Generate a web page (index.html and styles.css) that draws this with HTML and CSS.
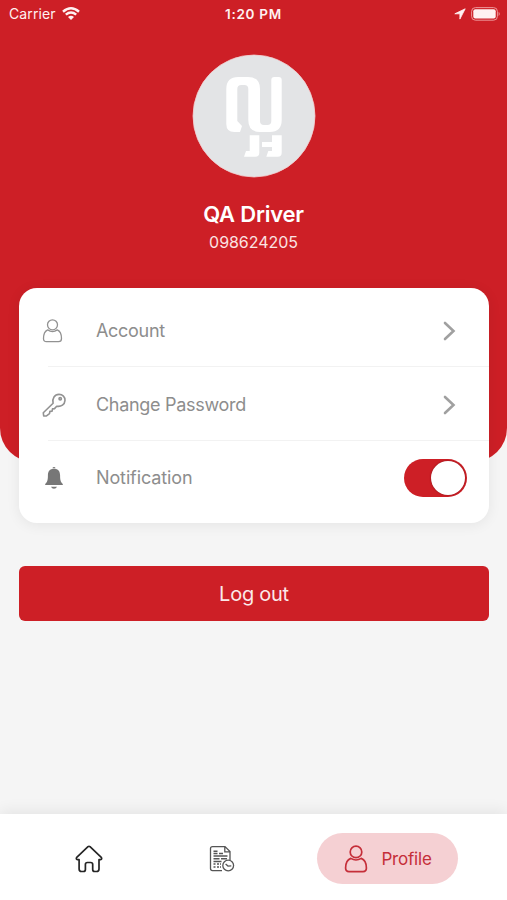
FILE: index.html
```html
<!DOCTYPE html>
<html lang="en">
<head>
<meta charset="utf-8">
<meta name="viewport" content="width=device-width, initial-scale=1">
<title>Profile</title>
<link rel="stylesheet" href="styles.css">
</head>
<body>
<div class="screen">
  <header class="hero">
    <div class="status">
      <div class="carrier"><span>Carrier</span>
        <svg width="18" height="14" viewBox="0 0 18 14" fill="none" stroke="currentColor" stroke-width="2.5"><path d="M1 4.7Q9-2.1 17 4.7M3.8 7.6q5.2-4.3 10.4 0"/><path d="M6 9.9q3-2.4 6 0L9 13Z" fill="currentColor" stroke="none"/></svg>
      </div>
      <time>1:20 PM</time>
      <div class="power">
        <svg width="12" height="12" viewBox="0 0 12 12" fill="currentColor" stroke="currentColor" stroke-width=".8" stroke-linejoin="round"><path d="M11.2.8.8 5.8h5.1v5.3Z"/></svg>
        <svg width="30" height="14" viewBox="0 0 30 14"><rect x=".6" y=".6" width="25.8" height="12.6" rx="3.8" fill="none" stroke="#ed9699" stroke-width="1"/><rect x="2.3" y="2.3" width="22.4" height="9.2" rx="2" fill="currentColor"/><path d="M27.6 4.7q2.3 2.2 0 4.4Z" fill="#ed9699"/></svg>
      </div>
    </div>
    <svg class="avatar" width="124" height="124" viewBox="0 0 124 124"><circle cx="62" cy="62" r="61" fill="#e3e4e6" stroke="#f3cfd1" stroke-width=".8"/>
      <path fill="#fff" d="M34.3 35Q34.3 23 46.3 23H56Q68 23 68 35V67Q68 71 72 71H75.3Q79.3 71 79.3 67V26Q79.3 23 82.3 23H86.7Q89.7 23 89.7 26V66Q89.7 78 77.7 78H68Q56.3 78 56.3 66V35Q56.3 31 52.3 31H49.3Q45.3 31 45.3 35V67L50 72 48 78H42.3Q34.3 78 34.3 70ZM57.7 81.3H67.3V98.7Q67.3 102.7 63.3 102.7H52L54 97H57.7ZM80 81.3H89.7V98.7Q89.7 102.7 85.7 102.7H74.3L76.3 97H80V93H70V88H80Z"/></svg>
    <h1>QA Driver</h1>
    <p class="phone">098624205</p>
  </header>
  <main>
    <section class="card">
      <div class="row">
        <svg class="icon" width="24" height="24" viewBox="0 0 24 24"><circle cx="10.5" cy="5.8" r="5"/><path d="M5.7 10.9Q10.5 14.2 15.3 10.9Q19.5 12.8 19.5 19.5Q19.5 22.7 16.5 22.7H4.5Q1.5 22.7 1.5 19.5Q1.5 12.8 5.7 10.9Z"/></svg>
        <span class="label label-account">Account</span>
        <svg class="chevron" width="14" height="20" viewBox="0 0 14 20"><path d="m2 2 8.5 8L2 18"/></svg>
      </div>
      <div class="row">
        <svg class="icon key" width="24" height="24" viewBox="0 0 24 24"><path d="M11.1 10.2C10 5.3 12.6 1.4 17 1.4c3.6 0 6.2 2.6 6 6-.2 4-3.8 6.6-8.3 5.8l-2.2 2.4-2 .3-.4 2.2-2.2.3-.4 2.2-3 2.3-2.8.1-.4-3.2Z"/><circle cx="18.2" cy="5.8" r="1.2"/></svg>
        <span class="label label-password">Change Password</span>
        <svg class="chevron" width="14" height="20" viewBox="0 0 14 20"><path d="m2 2 8.5 8L2 18"/></svg>
      </div>
      <div class="row">
        <svg class="icon bell" width="24" height="24" viewBox="0 0 24 24"><path d="M10.2 2.2q1.8-2.6 3.6 0ZM12 2.8C7.2 2.8 5.9 6 5.9 9.6c0 4.8-.6 6.6-2.7 8.3v1.2h17.6v-1.2c-2.1-1.7-2.7-3.5-2.7-8.3C18.1 6 16.8 2.8 12 2.8ZM9 20.7h6q-.8 2.1-3 2.1T9 20.7Z"/></svg>
        <span class="label label-notification">Notification</span>
        <button class="toggle" role="switch" aria-checked="true" aria-label="Notification"></button>
      </div>
    </section>
    <button class="logout"><span>Log out</span></button>
  </main>
  <nav>
    <a class="tab" aria-label="Home"><svg width="28" height="28" viewBox="0 0 28 28" fill="none" stroke="#252525" stroke-width="1.7" stroke-linejoin="round"><path d="M13 1.7q1-.8 2 0L26 12.1q1.6 2.2-.6 2.6H24V24q0 2.5-2.5 2.5h-1.8q-2 0-2-2v-5q0-2-2-2h-3.3q-2 0-2 2v5q0 2-2 2H6.6q-2.5 0-2.5-2.5v-9.3H2.6q-2.2-.4-.6-2.6Z"/></svg></a>
    <a class="tab" aria-label="History"><svg width="26" height="28" viewBox="0 0 26 28" fill="none" stroke="#555" stroke-width="1.3"><path d="M13 25.6H3.5q-2 0-2-2v-20q0-2 2-2H16l5 5V15M15.8 1.8v5h5"/><path d="M4.5 6.2h4M4.5 8.5h4M10 8.5h4M4.5 11h14M4.5 13.8h6M12 13.8h6M4.5 16.5h8M4.5 19h2M8 19h2M11 19h1M4.5 22h2M8 22h2M11 22h1" stroke-width="1.4"/><circle cx="19.2" cy="20.5" r="5.4" fill="#fff"/><path d="m16.6 19 2.4 2.1 3.3-.2"/></svg></a>
    <a class="tab profile"><svg width="24" height="28" viewBox="0 0 24 28" fill="none" stroke="currentColor" stroke-width="1.7"><circle cx="12" cy="6.9" r="5.8"/><path d="M6.8 13.4Q12 16.6 17.2 13.4Q22.4 15.4 22.4 23Q22.4 26.6 19 26.6H5Q1.6 26.6 1.6 23Q1.6 15.4 6.8 13.4Z"/></svg><span>Profile</span></a>
  </nav>
</div>
</body>
</html>
```
FILE: styles.css
```css
* { box-sizing: border-box; }
body { margin: 0; font-family: Inter, "Liberation Sans", sans-serif; background: #f5f5f5; }
button { border: 0; font: inherit; }
svg { display: block; flex: none; }
.screen { height: 900px; display: flex; flex-direction: column; overflow: hidden; }
.hero { height: 462px; flex: none; display: flex; flex-direction: column; align-items: center; background: #cd1f26; border-radius: 0 0 34px 34px; color: #fff; }
.status { width: 100%; height: 27px; padding: 0 6px 0 9px; display: grid; grid-template-columns: 1fr auto 1fr; align-items: center; font-size: 14px; color: #fff1f1; }
.carrier { display: flex; align-items: center; gap: 6px; letter-spacing: .1px; }
.status time { margin-right: 3px; font-size: 13.5px; font-weight: 600; letter-spacing: .7px; }
.power { display: flex; align-items: center; justify-content: flex-end; gap: 5px; }
.avatar { margin-top: 27px; }
h1 { margin: 22px 0 0; font-size: 22px; line-height: 28px; font-weight: 600; letter-spacing: -.2px; }
.phone { margin: 4px 0 0; font-size: 16px; line-height: 20px; color: #fbe3e3; letter-spacing: -.05px; }
main { flex: 1; margin-top: -174px; padding: 0 18px 0 19px; }
.card { height: 235px; padding: 5px 0 8px; background: #fff; border-radius: 18px; box-shadow: 0 2px 14px rgba(0,0,0,.07); }
.row { height: 74px; margin-left: 29px; display: flex; align-items: center; padding: 2px 22px 0 0; border-bottom: 1.5px solid #f2f2f2; }
.row:last-child { height: 73px; padding-top: 0; border: 0; }
.icon { margin-left: -6px; fill: none; stroke: #929292; stroke-width: 1.3; stroke-linejoin: round; }
.key { stroke-width: 1.6; }
.bell { fill: #777; stroke: none; }
.label { margin-left: 30px; flex: 1; font-size: 18px; color: #8d8d8d; white-space: nowrap; }
.label-account, .label-password { letter-spacing: -.3px; }
.label-notification { letter-spacing: -.12px; }
.chevron { margin-right: 10px; fill: none; stroke: #a0a0a0; stroke-width: 2.6; stroke-linecap: round; }
.toggle { width: 63px; height: 38px; padding: 2px; border-radius: 19px; background: #cd1f26; display: flex; justify-content: flex-end; }
.toggle::after { content: ""; width: 34px; height: 34px; border-radius: 50%; background: #fff; box-shadow: 0 0 2px #821016; }
.logout { display: block; width: 100%; height: 55px; margin-top: 43px; padding: 0; border-radius: 6px; background: #cd1f26; color: #fbe9e9; font-size: 20px; letter-spacing: -.25px; }
nav { height: 86px; flex: none; padding: 19px 49px 0 18px; display: grid; grid-template-columns: 141px 1fr 141px; background: #fff; box-shadow: 0 -3px 14px rgba(0,0,0,.07); }
.tab { height: 51px; display: flex; align-items: center; justify-content: center; }
.tab:nth-child(2) { padding-right: 33px; }
.profile { gap: 13px; background: #f5d0d3; border-radius: 26px; color: #c52e39; font-size: 17px; letter-spacing: -.2px; padding-left: 1px; }
```
